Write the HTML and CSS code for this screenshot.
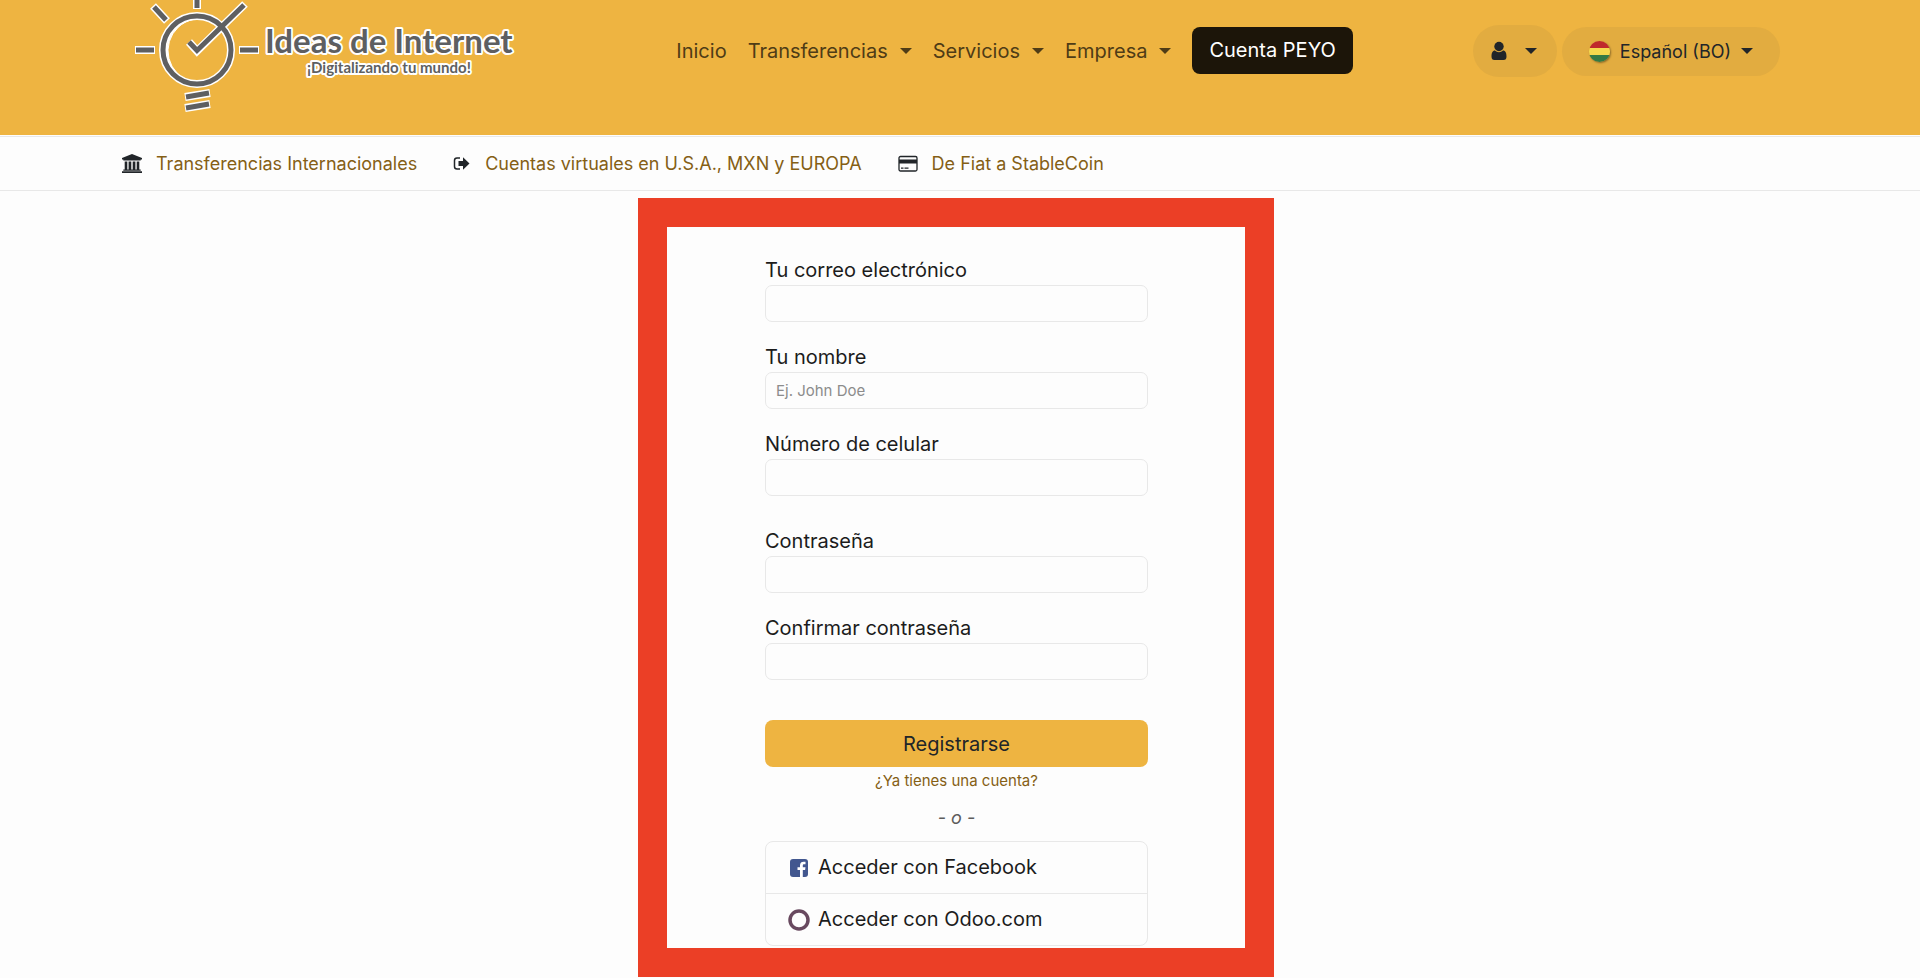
FILE: index.html
```html
<!DOCTYPE html>
<html lang="es">
<head>
    <meta charset="UTF-8">
    <meta name="viewport" content="width=device-width, initial-scale=1.0">
    <title>Registrarse | Ideas de Internet</title>
    <link rel="stylesheet" href="styles.css">
</head>
<body>
    <header class="header">
        <a href="#" class="logo" aria-label="Ideas de Internet">
            <svg width="386" height="112" viewBox="0 0 386 112">
                <!-- White outline -->
                <g fill="none" stroke="#fff" stroke-width="8">
                    <circle cx="64" cy="50" r="34"/>
                    <path d="M2 50h20M106 50h20M64 -4v13M20 6l14 15M56 42l8 9L112 4"/>
                    <path d="M52 97l25-4M52 108l25-4"/>
                </g>
                <path d="M60 19.500A31 31 0 0 0 44 73A32 32 0 0 1 60 19.500" fill="#fff" stroke="#fff" stroke-width="1"/>
                <g fill="none" stroke="#5e5f61" stroke-width="5">
                    <circle cx="64" cy="50" r="34"/>
                    <path d="M3 50h18M107 50h18M64 -5v13M21 7l12 13M56 42l8 8.500L111 5"/>
                    <path d="M53 97l23-4M53 108l23-4"/>
                </g>
                <text class="logo-name" x="132" y="53">Ideas de Internet</text>
                <text class="logo-slogan" x="174" y="73">¡Digitalizando tu mundo!</text>
            </svg>
        </a>
        <nav class="nav">
            <a href="#" class="nav-link">Inicio</a>
            <a href="#" class="nav-link">Transferencias <span class="caret"></span></a>
            <a href="#" class="nav-link">Servicios <span class="caret"></span></a>
            <a href="#" class="nav-link">Empresa <span class="caret"></span></a>
            <a href="#" class="nav-btn">Cuenta PEYO</a>
        </nav>
        <div class="actions">
            <button type="button" class="pill pill-user" aria-label="Usuario">
                <svg width="16" height="20" viewBox="0 0 16 20" fill="#212529">
                    <circle cx="8" cy="5.500" r="4.700"/>
                    <path d="M4 9.500C1.500 9.500 .5 12 .5 15.500C.5 18 1.500 19 3.500 19h9c2 0 3-1 3-3.500C15.500 12 14.500 9.500 12 9.500C9.500 11.800 6.500 11.800 4 9.500z"/>
                </svg>
                <span class="caret"></span>
            </button>
            <button type="button" class="pill pill-lang">
                <span class="flag"></span>
                <span>Español (BO)</span>
                <span class="caret"></span>
            </button>
        </div>
    </header>

    <nav class="subnav">
        <a href="#" class="subnav-link">
            <svg width="20" height="20" viewBox="0 0 20 20" fill="#212529">
                <path d="M10 0l10 4v1.500h-1.300v1H1.300v-1H0V4z"/>
                <path d="M2.700 7.500h2.600v8h1.300v-8h2.700v8h1.400v-8h2.700v8h1.300v-8h2.600v8h1.400v1.200H1.300v-1.200h1.400zM0 17.200h20V19H0z"/>
            </svg>
            Transferencias Internacionales
        </a>
        <a href="#" class="subnav-link">
            <svg width="18" height="20" viewBox="0 0 18 20">
                <path d="M7 4H4Q1.500 4 1.500 6.500v6Q1.500 15 4 15h3" fill="none" stroke="#212529" stroke-width="1.500"/>
                <path d="M5.500 7H10V3.300l6.500 6.200L10 15.700V12H5.500z" fill="#212529"/>
            </svg>
            Cuentas virtuales en U.S.A., MXN y EUROPA
        </a>
        <a href="#" class="subnav-link">
            <svg width="20" height="20" viewBox="0 0 20 20">
                <rect x="1" y="2.500" width="18" height="14.500" rx="1.500" fill="none" stroke="#212529" stroke-width="1.300"/>
                <path d="M1 5.500h18v4H1zM3 13.500h2.500v1.300H3zM6.500 13.500h4v1.300h-4z" fill="#212529"/>
            </svg>
            De Fiat a StableCoin
        </a>
    </nav>

    <main class="main">
        <div class="frame">
            <form class="signup">
                <div class="field">
                    <label for="login">Tu correo electrónico</label>
                    <input type="email" id="login">
                </div>
                <div class="field">
                    <label for="name">Tu nombre</label>
                    <input type="text" id="name" placeholder="Ej. John Doe">
                </div>
                <div class="field field-phone">
                    <label for="phone">Número de celular</label>
                    <input type="tel" id="phone">
                </div>
                <div class="field">
                    <label for="password">Contraseña</label>
                    <input type="password" id="password">
                </div>
                <div class="field">
                    <label for="confirm">Confirmar contraseña</label>
                    <input type="password" id="confirm">
                </div>
                <button type="submit" class="submit-btn">Registrarse</button>
                <a href="#" class="login-link">¿Ya tienes una cuenta?</a>
                <em class="separator">- o -</em>
                <div class="providers">
                    <a href="#" class="provider">
                        <svg width="22" height="22" viewBox="0 0 22 22">
                            <rect x="2" y="2" width="18" height="18" rx="3" fill="#42578f"/>
                            <path d="M12 20v-7H9.500v-2.700H12V8.300C12 5.800 13.500 4.700 15.500 4.700h2v2.500h-1.300c-1 0-1.400.5-1.400 1.400v1.700h2.700L17.100 13h-2.300v7z" fill="#fff"/>
                        </svg>
                        Acceder con Facebook
                    </a>
                    <a href="#" class="provider">
                        <svg width="22" height="22" viewBox="0 0 22 22">
                            <circle cx="11" cy="11" r="9" fill="none" stroke="#68495f" stroke-width="3.500"/>
                        </svg>
                        Acceder con Odoo.com
                    </a>
                </div>
            </form>
        </div>
    </main>
</body>
</html>
```
FILE: styles.css
```css
* {
    box-sizing: border-box;
}
body {
    font-family: Inter, "Liberation Sans", sans-serif;
    font-size: 20px;
    line-height: 30px;
    color: #1c1c1c;
    background-color: #fdfdfd;
    margin: 0;
}
a {
    text-decoration: none;
}
button, input {
    font-family: inherit;
}
svg {
    display: block;
    flex: none;
}

/* Header */
.header {
    display: flex;
    align-items: flex-start;
    min-height: 135px;
    padding: 0 140px 0 133px;
    background-color: #eeb441;
}
.logo svg {
    overflow: visible;
}
.logo-name, .logo-slogan {
    font-family: Lato, "Liberation Sans", sans-serif;
    fill: #5e5f61;
    stroke: #fff;
    stroke-width: 4px;
    stroke-linejoin: round;
    paint-order: stroke;
}
.logo-name {
    font-size: 33px;
    font-weight: 700;
}
.logo-slogan {
    font-size: 15px;
    font-weight: 700;
}
.nav {
    display: flex;
    align-items: center;
    gap: 21px;
    margin-left: auto;
    padding-top: 27px;
}
.nav-link {
    display: flex;
    align-items: center;
    gap: 12px;
    color: #4f3c16;
}
.nav-btn {
    padding: 8px 17px;
    border-radius: 8px;
    line-height: 31px;
    background-color: #1c1509;
    color: #fff;
}
.caret {
    border-top: 6px solid;
    border-left: 6px solid transparent;
    border-right: 6px solid transparent;
}
.actions {
    display: flex;
    align-items: center;
    gap: 5px;
    margin-left: 120px;
    padding-top: 25px;
}
.pill {
    display: flex;
    align-items: center;
    border: none;
    border-radius: 26px;
    background-color: #e2ac40;
    color: #212529;
    font-size: 18px;
    cursor: pointer;
}
.pill-user {
    gap: 18px;
    height: 52px;
    padding: 0 20px 0 18px;
}
.pill-lang {
    gap: 10px;
    height: 49px;
    padding: 0 27px;
}
.flag {
    width: 21px;
    height: 21px;
    border-radius: 50%;
    background: linear-gradient(#bf2a2c 33%, #f5d94e 33% 66%, #347a45 66%);
    box-shadow: 1px 1px 2px rgba(0, 0, 0, 0.4);
}

/* Links bar */
.subnav {
    display: flex;
    align-items: center;
    gap: 36px;
    margin-top: 1px;
    padding: 12px 122px 11px;
    border-top: 1px solid #e8e8e8;
    border-bottom: 1px solid #e8e8e8;
}
.subnav-link {
    display: flex;
    align-items: center;
    gap: 14px;
    font-size: 18px;
    color: #855f15;
}

/* Signup form */
.main {
    display: flex;
    justify-content: center;
    padding: 7px 8px 1px 0;
}
.frame {
    width: 636px;
    padding: 28px 97px 2px 98px;
    border: 29px solid #eb3f26;
}
.signup {
    display: flex;
    flex-direction: column;
}
.field {
    margin-bottom: 20px;
}
.field-phone {
    margin-bottom: 30px;
}
.field label {
    display: block;
}
.field input {
    display: block;
    width: 100%;
    height: 37px;
    padding: 0 10px;
    border: 1px solid #e8e8e8;
    border-radius: 7px;
    background-color: #fdfdfd;
    font-size: 15px;
}
.field input::placeholder {
    color: #8c8c8c;
}
.submit-btn {
    height: 47px;
    margin-top: 20px;
    border: none;
    border-radius: 8px;
    background-color: #eeb441;
    color: #212529;
    font-size: 20px;
    cursor: pointer;
}
.login-link {
    align-self: center;
    font-size: 15px;
    line-height: 28px;
    color: #855f15;
}
.separator {
    margin: 8px 0;
    text-align: center;
    font-size: 18px;
    color: #5c5c5c;
}
.providers {
    border: 1px solid #e8e8e8;
    border-radius: 8px;
}
.provider {
    display: flex;
    align-items: center;
    gap: 8px;
    padding: 10px 22px;
    line-height: 31px;
    color: #1c1c1c;
}
.provider + .provider {
    border-top: 1px solid #e8e8e8;
}
```
